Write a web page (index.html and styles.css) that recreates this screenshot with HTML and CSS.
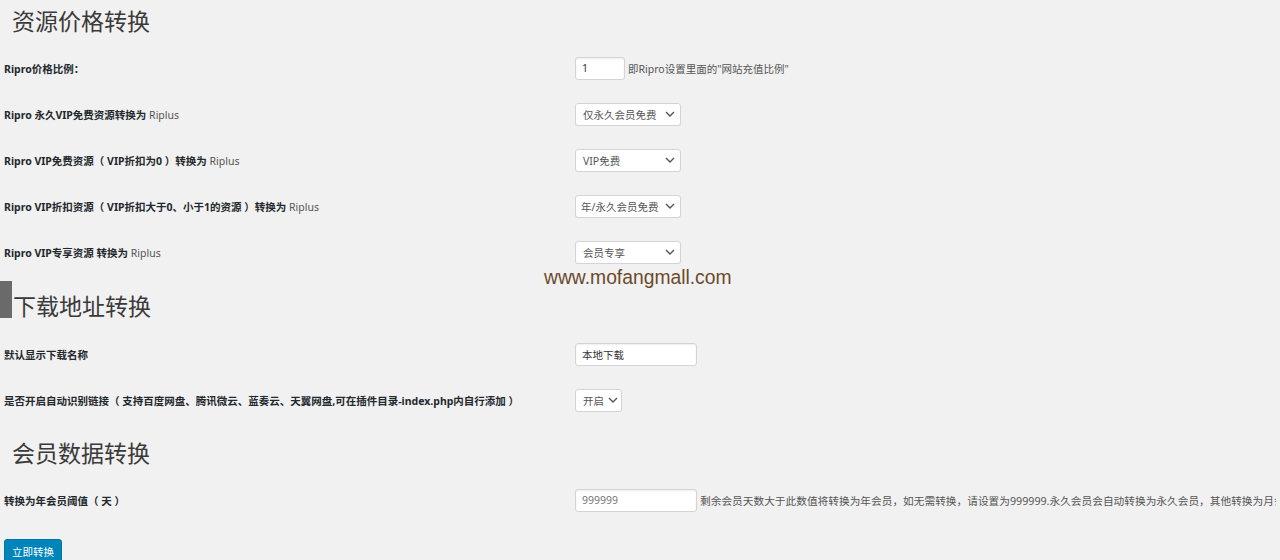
FILE: index.html
```html
<!DOCTYPE html>
<html lang="zh-CN">
<head>
<meta charset="utf-8">
<title>资源价格转换</title>
<link rel="stylesheet" href="styles.css">
</head>
<body>
<div class="wrap">
  <h1 class="title title-1">资源价格转换</h1>

  <div class="row">
    <div class="label">Ripro价格比例：</div>
    <div class="field">
      <span class="input input-xs">1</span>
      <span class="desc">即Ripro设置里面的"网站充值比例"</span>
    </div>
  </div>
  <div class="row">
    <div class="label">Ripro 永久VIP免费资源转换为 <span class="light">Riplus</span></div>
    <div class="field">
      <span class="select select-md"><span class="sel-text">仅永久会员免费</span><svg class="chev" viewBox="0 0 10 6" width="10" height="6"><path d="M1 1 L5 5 L9 1" fill="none" stroke="#555" stroke-width="1.4"/></svg></span>
    </div>
  </div>
  <div class="row">
    <div class="label">Ripro VIP免费资源（ VIP折扣为0 ）转换为 <span class="light">Riplus</span></div>
    <div class="field">
      <span class="select select-md"><span class="sel-text">VIP免费</span><svg class="chev" viewBox="0 0 10 6" width="10" height="6"><path d="M1 1 L5 5 L9 1" fill="none" stroke="#555" stroke-width="1.4"/></svg></span>
    </div>
  </div>
  <div class="row">
    <div class="label">Ripro VIP折扣资源（ VIP折扣大于0、小于1的资源 ）转换为 <span class="light">Riplus</span></div>
    <div class="field">
      <span class="select select-md tight"><span class="sel-text">年/永久会员免费</span><svg class="chev" viewBox="0 0 10 6" width="10" height="6"><path d="M1 1 L5 5 L9 1" fill="none" stroke="#555" stroke-width="1.4"/></svg></span>
    </div>
  </div>
  <div class="row">
    <div class="label">Ripro VIP专享资源 转换为 <span class="light">Riplus</span></div>
    <div class="field">
      <span class="select select-md"><span class="sel-text">会员专享</span><svg class="chev" viewBox="0 0 10 6" width="10" height="6"><path d="M1 1 L5 5 L9 1" fill="none" stroke="#555" stroke-width="1.4"/></svg></span>
    </div>
  </div>

  <h2 class="title title-2"><span class="marker"></span><span class="title-text">下载地址转换</span></h2>

  <div class="row">
    <div class="label">默认显示下载名称</div>
    <div class="field">
      <span class="input input-md">本地下载</span>
    </div>
  </div>
  <div class="row">
    <div class="label">是否开启自动识别链接（ 支持百度网盘、腾讯微云、蓝奏云、天翼网盘,可在插件目录-index.php内自行添加 ）</div>
    <div class="field">
      <span class="select select-sm"><span class="sel-text">开启</span><svg class="chev" viewBox="0 0 10 6" width="10" height="6"><path d="M1 1 L5 5 L9 1" fill="none" stroke="#555" stroke-width="1.4"/></svg></span>
    </div>
  </div>

  <h2 class="title title-3">会员数据转换</h2>

  <div class="row">
    <div class="label">转换为年会员阈值（ 天 ）</div>
    <div class="field">
      <span class="input input-md muted">999999</span>
      <span class="desc desc-long">剩余会员天数大于此数值将转换为年会员，如无需转换，请设置为999999.永久会员会自动转换为永久会员，其他转换为月会员</span>
    </div>
  </div>

  <div class="actions">
    <span class="button">立即转换</span>
  </div>

  <div class="watermark">www.mofangmall.com</div>
</div>
</body>
</html>
```

FILE: styles.css
```css
html, body {
  margin: 0;
  padding: 0;
  background: #f1f1f1;
  overflow: hidden;
}
body {
  font-family: "Noto Sans", "Noto Sans CJK SC", sans-serif;
  font-size: 10.5px;
  color: #23282d;
  width: 1280px;
  height: 560px;
}
.wrap {
  position: relative;
  padding: 0 4px;
  height: 560px;
}
.title {
  margin: 0;
  font-family: "Noto Sans CJK SC", "Noto Sans", sans-serif;
  font-weight: 400;
  font-size: 23px;
  line-height: 30px;
  color: #3a3a3a;
}
.title-1 {
  padding: 5px 0 0 8px;
  margin-bottom: 10px;
}
.title-2 {
  display: flex;
  align-items: flex-start;
  margin-left: -4px;
  height: 56px;
}
.marker {
  width: 12px;
  height: 37px;
  margin-top: 5.5px;
  background: #6a6a6a;
  flex: none;
}
.title-text {
  margin-top: 15px;
  padding-left: 1px;
}
.title-3 {
  padding: 13.5px 0 0 8px;
  height: 40.5px;
}
.row {
  display: grid;
  grid-template-columns: 571px 1fr;
  align-items: center;
  height: 46px;
  white-space: nowrap;
}
.label {
  font-weight: 700;
  font-family: "Noto Sans", "Noto Sans CJK SC", sans-serif;
  color: #23282d;
}
.light {
  font-weight: 400;
  color: #555;
}
.field {
  display: flex;
  align-items: center;
  min-width: 0;
  overflow: hidden;
}
.input, .select {
  box-sizing: border-box;
  height: 23px;
  background: #fff;
  border: 1px solid #d4d4d4;
  border-radius: 3px;
  box-shadow: inset 0 1px 2px rgba(0,0,0,0.07);
  display: inline-flex;
  align-items: center;
  color: #333;
  font-size: 10.5px;
  flex: none;
}
.input {
  padding-left: 6px;
}
.input-xs { width: 50px; }
.input-md { width: 122px; }
.muted { color: #777; }
.select {
  justify-content: space-between;
  padding: 0 5px 0 7px;
  color: #555;
  box-shadow: 0 1px 1px rgba(0,0,0,0.04);
}
.select.tight { padding-left: 5px; }
.select-md { width: 106px; }
.select-sm { width: 47px; padding-right: 5px; }
.select-sm .sel-text { margin-right: 4px; }
.chev { flex: none; }
.desc {
  margin-left: 3px;
  color: #555;
}
.desc-long {
  font-size: 10.7px;
}
.actions {
  padding-top: 15.5px;
}
.button {
  display: inline-flex;
  align-items: center;
  box-sizing: border-box;
  height: 25px;
  padding: 0 7px;
  background: #0085ba;
  border: 1px solid #0073aa;
  border-radius: 3px;
  color: #fff;
  font-size: 10.5px;
}
.watermark {
  position: absolute;
  left: 544px;
  top: 269px;
  font-family: "Liberation Sans", Arial, sans-serif;
  font-size: 19.3px;
  line-height: 18px;
  color: #6b4a2c;
}
```
